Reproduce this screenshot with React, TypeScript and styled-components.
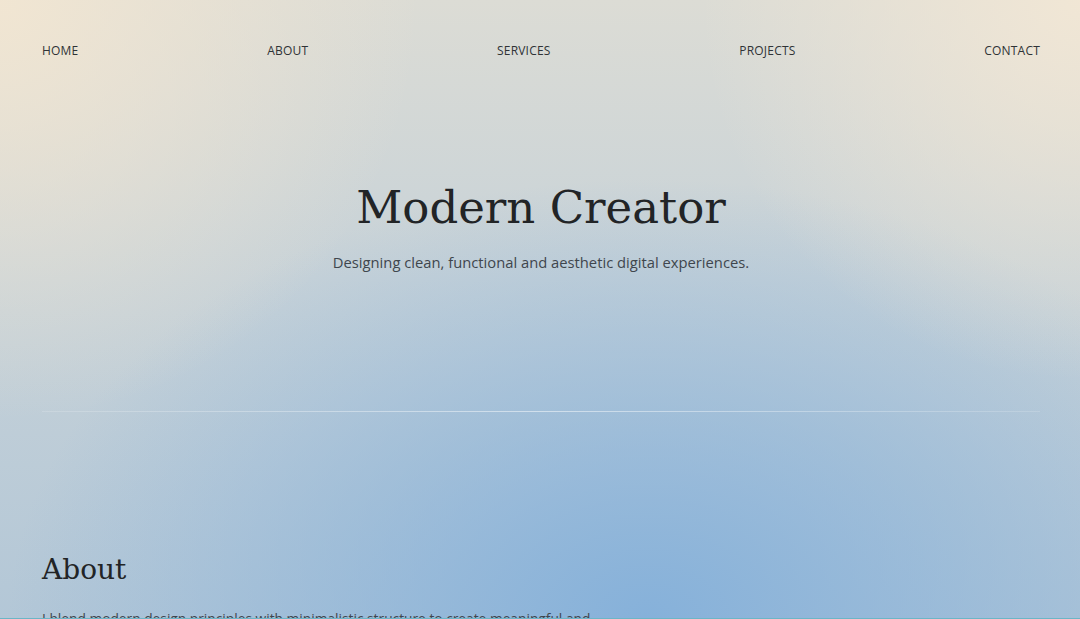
import styled, { createGlobalStyle } from 'styled-components';

const GlobalStyle = createGlobalStyle`
  html, body {
    margin: 0;
    padding: 0;
  }
  body {
    min-height: 100vh;
    font-family: 'Open Sans', 'Noto Sans', sans-serif;
    color: #2b2f33;
    background:
      radial-gradient(circle 420px at 0 0, rgba(242, 230, 210, 0.95), rgba(242, 230, 210, 0) 100%),
      radial-gradient(circle 380px at 100% 0, rgba(242, 231, 213, 0.95), rgba(242, 231, 213, 0) 100%),
      radial-gradient(ellipse 640px 440px at 60% 100%, rgba(134, 177, 218, 1), rgba(134, 177, 218, 0) 100%),
      linear-gradient(180deg, #dcdcd5 0%, #c7d2d8 45%, #b3c7d7 100%);
    background-attachment: fixed;
  }
  body::after {
    content: '';
    position: fixed;
    left: 0;
    right: 0;
    bottom: 0;
    height: 1px;
    background: #6cb6c6;
  }
`;

const navItems = ['Home', 'About', 'Services', 'Projects', 'Contact'];

const App: React.FC = () => {
  return (
    <Page>
      <GlobalStyle />
      <Nav>
        {navItems.map((item) => (
          <NavLink key={item} href={`#${item.toLowerCase()}`}>
            {item}
          </NavLink>
        ))}
      </Nav>

      <Hero>
        <Title>Modern Creator</Title>
        <Subtitle>Designing clean, functional and aesthetic digital experiences.</Subtitle>
      </Hero>

      <Divider />

      <Section id="about">
        <SectionTitle>About</SectionTitle>
        <SectionText>
          I blend modern design principles with minimalistic structure to create meaningful and
          memorable digital products.
        </SectionText>
      </Section>
    </Page>
  );
};

export default App;

const Page = styled.div`
  padding: 0 40px 0 42px;
`;

const Nav = styled.nav`
  display: flex;
  justify-content: space-between;
  align-items: center;
  height: 100px;
`;

const NavLink = styled.a`
  font-size: 12px;
  color: #2f3336;
  text-decoration: none;
  text-transform: uppercase;
  letter-spacing: 0.2px;
`;

const Hero = styled.header`
  display: flex;
  flex-direction: column;
  align-items: center;
  padding-top: 78px;
  height: 233px;
`;

const Title = styled.h1`
  margin: 0;
  font-family: 'DejaVu Serif', Georgia, serif;
  font-weight: 400;
  font-size: 45px;
  line-height: 60px;
  color: #222426;
`;

const Subtitle = styled.p`
  margin: 14px 0 0;
  font-size: 14.75px;
  color: #3f464d;
`;

const Divider = styled.hr`
  margin: 0;
  border: 0;
  height: 1px;
  background: linear-gradient(
    to right,
    rgba(255, 255, 255, 0.15),
    rgba(255, 255, 255, 0.5) 50%,
    rgba(255, 255, 255, 0.15)
  );
`;

const Section = styled.section`
  padding-top: 136px;
`;

const SectionTitle = styled.h2`
  margin: 0;
  font-family: 'DejaVu Serif', Georgia, serif;
  font-weight: 400;
  font-size: 28px;
  line-height: 44px;
  color: #222426;
`;

const SectionText = styled.p`
  margin: 15px 0 0;
  max-width: 600px;
  font-size: 13.75px;
  line-height: 1.7;
  color: #3f464d;
`;
